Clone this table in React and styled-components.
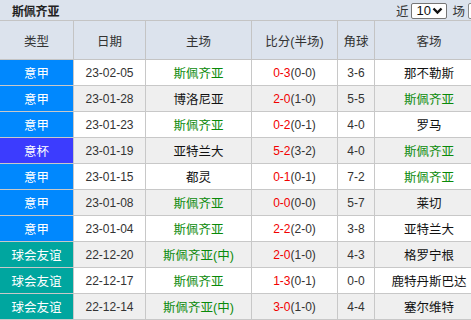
import React from 'react'
import styled, { createGlobalStyle } from 'styled-components'

const GlobalStyle = createGlobalStyle`
  body {
    margin: 0;
    overflow: hidden;
    background: #fff;
    font-family: "Liberation Sans", "Noto Sans CJK SC", sans-serif;
  }
`;

const TEAM = '斯佩齐亚';

const matches = [
  { type: '意甲', date: '23-02-05', home: '斯佩齐亚', ft: '0-3', ht: '0-0', corner: '3-6', away: '那不勒斯' },
  { type: '意甲', date: '23-01-28', home: '博洛尼亚', ft: '2-0', ht: '1-0', corner: '5-5', away: '斯佩齐亚' },
  { type: '意甲', date: '23-01-23', home: '斯佩齐亚', ft: '0-2', ht: '0-1', corner: '4-0', away: '罗马' },
  { type: '意杯', date: '23-01-19', home: '亚特兰大', ft: '5-2', ht: '3-2', corner: '4-0', away: '斯佩齐亚' },
  { type: '意甲', date: '23-01-15', home: '都灵', ft: '0-1', ht: '0-1', corner: '7-2', away: '斯佩齐亚' },
  { type: '意甲', date: '23-01-08', home: '斯佩齐亚', ft: '0-0', ht: '0-0', corner: '5-7', away: '莱切' },
  { type: '意甲', date: '23-01-04', home: '斯佩齐亚', ft: '2-2', ht: '2-0', corner: '3-8', away: '亚特兰大' },
  { type: '球会友谊', date: '22-12-20', home: '斯佩齐亚(中)', ft: '2-0', ht: '1-0', corner: '4-3', away: '格罗宁根' },
  { type: '球会友谊', date: '22-12-17', home: '斯佩齐亚', ft: '1-3', ht: '0-1', corner: '0-0', away: '鹿特丹斯巴达' },
  { type: '球会友谊', date: '22-12-14', home: '斯佩齐亚(中)', ft: '3-0', ht: '1-0', corner: '4-4', away: '塞尔维特' },
];

const leagueColors = {
  '意甲': '#0088fe',
  '意杯': '#3c3cfe',
  '球会友谊': '#00a69f',
};

function App() {
  return (
    <>
      <GlobalStyle />
      <Wrapper>
        <TopBar>
          <Title>{TEAM}</Title>
          <Filter>
            <Word>近</Word>
            <FakeSelect>
              10
              <svg width="11" height="8" viewBox="0 0 11 8">
                <path d="M1.5 1.5 L5.5 5.5 L9.5 1.5" fill="none" stroke="#111" strokeWidth="2.4" />
              </svg>
            </FakeSelect>
            <Word $gap={5}>场</Word>
            <CutBox />
          </Filter>
        </TopBar>
        <Grid>
          {['类型', '日期', '主场', '比分(半场)', '角球', '客场'].map((h) => (
            <HeadCell key={h}>{h}</HeadCell>
          ))}
          {matches.map((m, i) => (
            <React.Fragment key={m.date}>
              <TypeCell $bg={leagueColors[m.type]}>{m.type}</TypeCell>
              <Cell $alt={i % 2 === 1}>{m.date}</Cell>
              <Cell $alt={i % 2 === 1} $team $us={m.home.startsWith(TEAM)}>{m.home}</Cell>
              <Cell $alt={i % 2 === 1}>
                <Full>{m.ft}</Full>({m.ht})
              </Cell>
              <Cell $alt={i % 2 === 1}>{m.corner}</Cell>
              <Cell $alt={i % 2 === 1} $team $us={m.away.startsWith(TEAM)}>{m.away}</Cell>
            </React.Fragment>
          ))}
        </Grid>
      </Wrapper>
    </>
  );
}

const Wrapper = styled.div`
  width: 484px;
  background: #dce3ed;
`;

const TopBar = styled.div`
  height: 20px;
  display: flex;
  align-items: center;
  justify-content: space-between;
  padding-left: 12px;
  border-bottom: 1px solid #c4c4c4;
`;

const Title = styled.div`
  font-family: "Noto Sans CJK SC", sans-serif;
  font-weight: 700;
  font-size: 12px;
  color: #222;
  letter-spacing: -0.2px;
`;

const Filter = styled.div`
  display: flex;
  align-items: center;
  font-family: "Noto Sans CJK SC", sans-serif;
  font-size: 12.5px;
  color: #333;
`;

const Word = styled.span`
  margin: 0 3px 0 ${(p) => p.$gap || 0}px;
`;

const FakeSelect = styled.div`
  box-sizing: border-box;
  width: 36px;
  height: 16px;
  margin-top: 1px;
  border: 1px solid #767676;
  border-radius: 2px;
  background: #fff;
  display: flex;
  align-items: center;
  justify-content: space-between;
  padding: 0 3px 0 4px;
  font-family: "Liberation Sans", sans-serif;
  font-size: 13px;
  color: #111;
`;

const CutBox = styled.div`
  width: 16px;
  height: 16px;
  margin-top: 1px;
  box-sizing: border-box;
  border: 1px solid #8a8a8a;
  border-radius: 2px;
  background: #fff;
`;

const Grid = styled.div`
  display: grid;
  grid-template-columns: 74px 72px 106px 86px 37px 109px;
  grid-template-rows: 39px;
  grid-auto-rows: 26px;
`;

const HeadCell = styled.div`
  display: flex;
  align-items: center;
  justify-content: center;
  border-right: 1px solid #c4c4c4;
  border-bottom: 1px solid #c4c4c4;
  background: #dce3ed;
  font-family: "Liberation Sans", "Noto Sans CJK SC", sans-serif;
  font-size: 12.5px;
  color: #333;
`;

const Cell = styled.div`
  display: flex;
  align-items: center;
  justify-content: center;
  border-right: 1px solid #c8c8c8;
  border-bottom: 1px solid #c8c8c8;
  background: ${(p) => (p.$alt ? '#efefef' : '#fff')};
  font-family: "Liberation Sans", "Noto Sans CJK SC", sans-serif;
  font-size: 12px;
  color: ${(p) => (p.$us ? '#0a8a0a' : p.$team ? '#111' : '#333')};
  white-space: nowrap;
  ${(p) => p.$team && 'font-size: 12.5px;'}
`;

const TypeCell = styled(Cell)`
  background: ${(p) => p.$bg};
  color: #fff;
  font-size: 12.5px;
`;

const Full = styled.span`
  color: #f20000;
`;

export default App;
